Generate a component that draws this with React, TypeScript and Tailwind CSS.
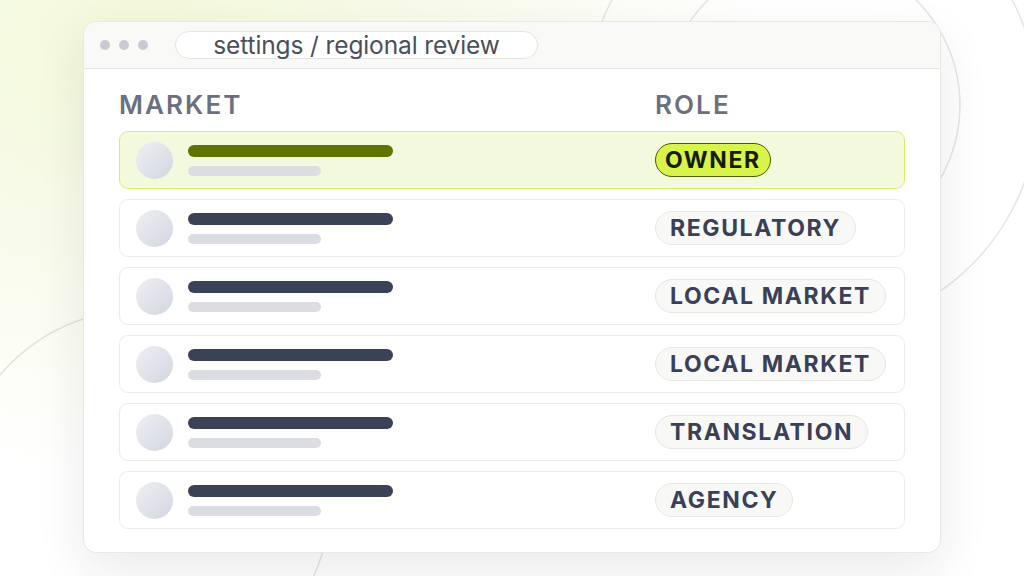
import React from 'react'

interface Member {
    id: number
    role: string
    owner?: boolean
}

const MEMBERS: Member[] = [
    { id: 1, role: 'OWNER', owner: true },
    { id: 2, role: 'REGULATORY' },
    { id: 3, role: 'LOCAL MARKET' },
    { id: 4, role: 'LOCAL MARKET' },
    { id: 5, role: 'TRANSLATION' },
    { id: 6, role: 'AGENCY' },
]

// Thin ring decoration behind the window
const Rings = () => (
    <svg className="absolute inset-0 h-full w-full" viewBox="0 0 1024 576" fill="none">
        <circle cx="812" cy="105" r="148" stroke="#e5e5e1" strokeWidth="1.5" />
        <circle cx="812" cy="105" r="226" stroke="#e5e5e1" strokeWidth="1.5" />
        <circle cx="143" cy="497" r="188" stroke="#e2e3dc" strokeWidth="1.5" />
    </svg>
)

const MemberRow = ({ member }: { member: Member }) => {
    const rowClass = member.owner
        ? 'border-[#d6ef68] bg-[#f3f9dc]'
        : 'border-[#ebebe7] bg-white'
    const barClass = member.owner ? 'bg-[#5e7300]' : 'bg-[#3b4258]'
    const pillClass = member.owner
        ? 'border-[1.5px] border-[#4b5b00] bg-[#d8f34a] px-[9px] text-[#161c05]'
        : 'border border-[#e6e6e2] bg-[#f8f8f6] px-[14px] text-[#394057]'

    return (
        <div className={`flex h-[58px] items-center rounded-[9px] border px-4 ${rowClass}`}>
            <div className="flex w-[519px] shrink-0 items-center gap-[15px]">
                <div className="h-[37px] w-[37px] rounded-full bg-gradient-to-br from-[#eff0f4] to-[#d2d6df]" />
                <div className="flex flex-col gap-[9px]">
                    <div className={`h-[12px] w-[205px] rounded-full ${barClass}`} />
                    <div className="h-[10px] w-[133px] rounded-full bg-[#dcdde2]" />
                </div>
            </div>
            <span className={`flex h-[34px] shrink-0 items-center whitespace-nowrap rounded-full text-[23px] font-bold tracking-[0.07em] ${pillClass}`}>
                {member.role}
            </span>
        </div>
    )
}

export default function App() {
    return (
        <div
            className="relative h-[576px] w-[1024px] overflow-hidden bg-[radial-gradient(ellipse_60%_75%_at_14%_8%,#f3f9d9_0%,#f8fbea_45%,#ffffff_100%)]"
            style={{ fontFamily: 'Inter, "Noto Sans", sans-serif' }}
        >
            <Rings />
            <div className="relative flex justify-center pt-[21px]">
                <div className="w-[858px] overflow-hidden rounded-[13px] border border-[#e8e8e5] bg-white shadow-[0_18px_50px_rgba(30,35,50,0.09)]">
                    {/* title bar */}
                    <div className="flex h-[47px] items-center border-b border-[#e6e6e3] bg-[#f9f9f8] pl-[16px]">
                        <div className="flex gap-[9px]">
                            <span className="h-[10px] w-[10px] rounded-full bg-[#c9cad4]" />
                            <span className="h-[10px] w-[10px] rounded-full bg-[#c9cad4]" />
                            <span className="h-[10px] w-[10px] rounded-full bg-[#c9cad4]" />
                        </div>
                        <div className="ml-[27px] flex h-[28px] w-[363px] items-center justify-center rounded-full border border-[#e4e4e0] bg-white text-[24.5px] tracking-[-0.005em] text-[#4a4f5c]">
                            settings / regional review
                        </div>
                    </div>

                    <div className="px-[35px] pb-[23px] pt-[20px]">
                        <div className="flex text-[26px] font-semibold leading-[32px] tracking-[0.08em] text-[#6b7080]">
                            <div className="w-[536px]">MARKET</div>
                            <div>ROLE</div>
                        </div>
                        <div className="mt-[10px] flex flex-col gap-[10px]">
                            {MEMBERS.map(m => (
                                <MemberRow key={m.id} member={m} />
                            ))}
                        </div>
                    </div>
                </div>
            </div>
        </div>
    )
}
